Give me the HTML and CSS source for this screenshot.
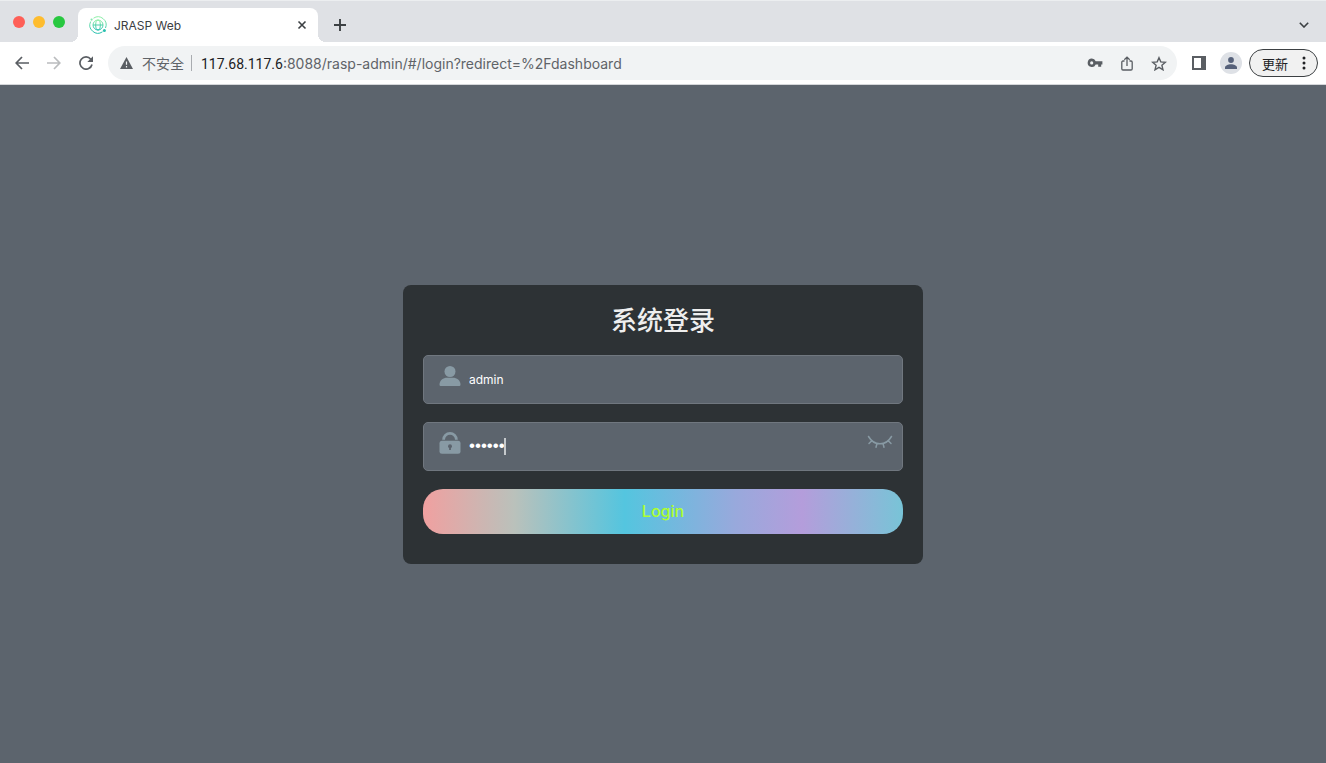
FILE: index.html
```html
<!DOCTYPE html>
<html lang="zh-CN">
<head>
<meta charset="utf-8">
<meta name="viewport" content="width=device-width, initial-scale=1">
<title>JRASP Web</title>
<link rel="stylesheet" href="styles.css">
</head>
<body>
<div class="window">
  <header class="browser">
    <div class="tab-strip">
      <div class="lights">
        <span class="light light-red"></span>
        <span class="light light-yellow"></span>
        <span class="light light-green"></span>
      </div>
      <div class="tab">
        <svg class="favicon" viewBox="0 0 18 18" width="18" height="18" fill="none">
          <defs><linearGradient id="fav" x1="0" y1="0" x2="0" y2="1"><stop offset="0" stop-color="#8fefa6"/><stop offset="1" stop-color="#27bfae"/></linearGradient></defs>
          <g stroke="url(#fav)" stroke-width="1">
            <circle cx="9" cy="9" r="5"/>
            <ellipse cx="9" cy="9" rx="2.3" ry="5"/>
            <path d="M4.500 2.200A8.100 8.100 0 0 1 16.500 12M13.500 15.800A8.100 8.100 0 0 1 1.700 5.500"/>
          </g>
          <path d="M4 9h10" stroke="#4fd0a8"/>
          <circle cx="2.600" cy="3.600" r="1.100" fill="#83e8ad"/>
          <circle cx="15.400" cy="14.400" r="1.500" fill="#27bfae"/>
        </svg>
        <span class="tab-title">JRASP Web</span>
        <button class="icon-button tab-close" aria-label="关闭标签页">
          <svg viewBox="0 0 10 10" width="10" height="10" stroke="#3c4043" stroke-width="1.600"><path d="M1.500 1.500l7 7M8.500 1.500l-7 7"/></svg>
        </button>
      </div>
      <button class="icon-button new-tab" aria-label="新标签页">
        <svg viewBox="0 0 12 12" width="12" height="12" stroke="#3c4043" stroke-width="1.900"><path d="M6 0v12M0 6h12"/></svg>
      </button>
      <button class="icon-button tab-search" aria-label="搜索标签页">
        <svg viewBox="0 0 10 6" width="10" height="6" fill="none" stroke="#3c4043" stroke-width="1.600"><path d="M.8.8L5 5 9.200.8"/></svg>
      </button>
    </div>
    <div class="toolbar">
      <nav class="nav">
        <button class="icon-button" aria-label="后退">
          <svg viewBox="0 0 14 14" width="14" height="14" fill="none" stroke="#5a5e63" stroke-width="1.700"><path d="M14 7H1.500M7 1L1.200 7 7 13"/></svg>
        </button>
        <button class="icon-button" aria-label="前进">
          <svg viewBox="0 0 14 14" width="14" height="14" fill="none" stroke="#babcbe" stroke-width="1.700"><path d="M0 7h12.500M7 1l5.800 6L7 13"/></svg>
        </button>
        <button class="icon-button" aria-label="重新加载">
          <svg viewBox="0 0 14 14" width="14" height="14"><path d="M11.800 3.200A6.100 6.100 0 1 0 13 8.500" fill="none" stroke="#5a5e63" stroke-width="1.700"/><path d="M14 .3v5.700H8.300z" fill="#5a5e63"/></svg>
        </button>
      </nav>
      <div class="address">
        <svg class="warn" viewBox="0 0 13 12" width="13" height="12"><path d="M6.500 0L13 12H0z" fill="#5a5e63"/><path d="M6.500 4.500v3.300M6.500 9v1.400" stroke="#f1f3f4" stroke-width="1.200"/></svg>
        <span class="insecure">不安全</span>
        <span class="divider"></span>
        <span class="url"><span class="host">117.68.117.6</span>:8088/rasp-admin/#/login?redirect=%2Fdashboard</span>
        <div class="address-actions">
          <button class="icon-button" aria-label="密码">
            <svg viewBox="0 0 16 10" width="16" height="10"><path fill="#5a5e63" fill-rule="evenodd" d="M4.700.600a4.200 4.200 0 1 0 4 5.900h2.500v2.300h3V6.500H15.400V3.200H8.700A4.200 4.200 0 0 0 4.700.600zm0 2.700a1.600 1.600 0 1 1 0 3.200 1.600 1.600 0 0 1 0-3.200z"/></svg>
          </button>
          <button class="icon-button" aria-label="分享">
            <svg viewBox="0 0 12 15" width="12" height="15" fill="none" stroke="#5a5e63" stroke-width="1.300"><path d="M3.500 5H2a1.200 1.200 0 0 0-1.200 1.200v6.600A1.200 1.200 0 0 0 2 14h8a1.200 1.200 0 0 0 1.200-1.200V6.200A1.200 1.200 0 0 0 10 5H8.500M6 10V1.200M3.300 3.800L6 1.100l2.700 2.700"/></svg>
          </button>
          <button class="icon-button" aria-label="收藏">
            <svg viewBox="0 0 16 15" width="16" height="15" fill="none" stroke="#5a5e63" stroke-width="1.400"><path d="M8 1.700l1.800 4.200 4.600.4-3.500 3 1.100 4.500L8 11.400l-4 2.400 1.100-4.500-3.500-3 4.600-.4z"/></svg>
          </button>
        </div>
      </div>
      <div class="tools">
        <button class="icon-button" aria-label="侧边栏">
          <svg viewBox="0 0 14 14" width="14" height="14"><path d="M0 0h14v14H0zM2 2v10h7V2z" fill="#5a5e63" fill-rule="evenodd"/></svg>
        </button>
        <button class="avatar" aria-label="个人资料">
          <svg viewBox="0 0 12 12" width="12" height="12" fill="#56617a"><circle cx="6" cy="3" r="2.900"/><path d="M0 12v-1.500C0 8.500 3 7.200 6 7.200s6 1.300 6 3.300V12z"/></svg>
        </button>
        <button class="update">
          <span>更新</span>
          <svg viewBox="0 0 4 14" width="4" height="14" fill="#202124"><circle cx="2" cy="2" r="1.500"/><circle cx="2" cy="7" r="1.500"/><circle cx="2" cy="12" r="1.500"/></svg>
        </button>
      </div>
    </div>
  </header>
  <main class="page">
    <form class="card">
      <h1 class="title">系统登录</h1>
      <div class="field">
        <label class="field-icon" for="username" aria-label="用户名">
          <svg viewBox="0 0 22 22" width="22" height="22" fill="#889aa4"><circle cx="11" cy="6.500" r="5.500"/><path d="M.5 19.500c0-4.200 3.800-6.700 7.500-6.700h6c3.700 0 7.500 2.500 7.500 6.700 0 1-.6 1.500-1.500 1.500H2C1.100 21 .5 20.500.5 19.500z"/></svg>
        </label>
        <input class="input" id="username" type="text" value="admin" autocomplete="off">
      </div>
      <div class="field">
        <label class="field-icon" for="password" aria-label="密码">
          <svg viewBox="0 0 22 22" width="22" height="22"><path d="M4.600 7.800a6.400 6.400 0 0 1 12.800 0" fill="none" stroke="#889aa4" stroke-width="2.800"/><rect x=".5" y="8.800" width="21" height="13" rx="2.500" fill="#889aa4"/><circle cx="11" cy="14.200" r="2" fill="#5c646d"/><path d="M11 14v4" stroke="#5c646d" stroke-width="1.800"/></svg>
        </label>
        <div class="password-box">
          <input class="input input-password" id="password" type="password" value="123456" autocomplete="off">
          <span class="caret"></span>
        </div>
        <button class="icon-button eye" type="button" aria-label="显示密码">
          <svg viewBox="0 0 26 14" width="26" height="14" fill="none" stroke="#889aa4" stroke-width="1.500" stroke-linecap="round"><path d="M1.500 1.500C4 5.800 8 8.800 13 8.800s9-3 11.500-7.300M4.800 5.700L2 8.500M21.200 5.700L24 8.500M10 8.500l-1 3.800M16 8.500l1 3.800"/></svg>
        </button>
      </div>
      <button class="login" type="button">Login</button>
    </form>
  </main>
</div>
</body>
</html>
```
FILE: styles.css
```css
* {
  box-sizing: border-box;
}

body {
  margin: 0;
  background: #5c646d;
  font-family: Inter, "Noto Sans CJK SC", sans-serif;
}

button,
input {
  font-family: inherit;
}

svg {
  display: block;
}

.window {
  display: flex;
  flex-direction: column;
  min-height: 100vh;
}

.icon-button {
  display: grid;
  place-items: center;
  width: 32px;
  height: 28px;
  padding: 0;
  border: 0;
  background: none;
}

.tab-strip {
  display: flex;
  align-items: flex-end;
  height: 42px;
  background: #dfe1e5;
  border-top: 1px solid #eceef0;
}

.lights {
  display: flex;
  gap: 8px;
  width: 78px;
  padding: 0 0 14px 13px;
}

.light {
  width: 12px;
  height: 12px;
  border-radius: 50%;
}

.light-red {
  background: #fe5f57;
}

.light-yellow {
  background: #febc2e;
}

.light-green {
  background: #28c840;
}

.tab {
  display: flex;
  align-items: center;
  gap: 7px;
  width: 240px;
  height: 34px;
  padding: 0 0 0 11px;
  background: #fff;
  border-radius: 8px 8px 0 0;
  position: relative;
}

.tab::before,
.tab::after {
  content: "";
  position: absolute;
  bottom: 0;
  width: 8px;
  height: 8px;
}

.tab::before {
  right: 100%;
  background: radial-gradient(circle at 0 0, #dfe1e5 8px, #fff 8px);
}

.tab::after {
  left: 100%;
  background: radial-gradient(circle at 100% 0, #dfe1e5 8px, #fff 8px);
}

.tab-title {
  flex: 1;
  font-size: 12px;
  color: #3c4043;
}

.new-tab {
  width: 44px;
  height: 34px;
}

.tab-search {
  width: 44px;
  height: 34px;
  margin-left: auto;
}

.toolbar {
  display: flex;
  align-items: center;
  height: 43px;
  padding: 0 8px 0 6px;
  background: #fff;
  border-bottom: 1px solid #d5d7da;
}

.nav {
  display: flex;
  width: 102px;
}

.address {
  display: flex;
  align-items: center;
  flex: 1;
  height: 34px;
  padding: 0 2px 0 12px;
  border-radius: 17px;
  background: #f1f3f4;
  font-size: 14px;
  color: #5f6368;
}

.insecure {
  margin-left: 9px;
}

.divider {
  width: 1px;
  height: 16px;
  margin: 0 9px 0 7px;
  background: #a9acb0;
}

.url {
  white-space: nowrap;
}

.host {
  font-family: Roboto, sans-serif;
  color: #202124;
}

.address-actions {
  display: flex;
  margin-left: auto;
}

.tools {
  display: flex;
  align-items: center;
  padding-left: 6px;
}

.avatar {
  display: grid;
  place-items: center;
  width: 22px;
  height: 22px;
  margin: 0 7px 0 5px;
  padding: 0;
  border: 0;
  border-radius: 50%;
  background: #dee1e6;
}

.update {
  display: flex;
  align-items: center;
  justify-content: space-between;
  width: 69px;
  height: 28px;
  padding: 0 11px 0 12px;
  border: 1px solid #3c4043;
  border-radius: 14px;
  background: #f1f1f1;
  color: #202124;
  font-size: 13px;
}

.page {
  display: grid;
  place-items: center;
  flex: 1;
  padding: 20px;
  background: #5c646d;
}

.card {
  display: flex;
  flex-direction: column;
  gap: 18px;
  width: 100%;
  max-width: 520px;
  padding: 20px 20px 30px;
  border-radius: 8px;
  background: #2d3235;
}

.title {
  margin: 0;
  color: #eee;
  font-size: 26px;
  font-weight: 500;
  line-height: 32px;
  text-align: center;
}

.field {
  display: flex;
  align-items: center;
  height: 49px;
  padding: 0 6px 0 15px;
  border: 1px solid #70777f;
  border-radius: 5px;
  background: #5c646d;
}

.field-icon {
  padding-bottom: 6px;
}

.input {
  flex: 1;
  display: block;
  width: 100%;
  height: 47px;
  padding: 0 8px;
  border: 0;
  outline: 0;
  background: none;
  color: #fff;
  font-size: 12px;
}

.input-password {
  font-family: "Liberation Sans", sans-serif;
  font-size: 17px;
}

.password-box {
  flex: 1;
  position: relative;
}

.caret {
  position: absolute;
  left: 43px;
  top: 15px;
  width: 2px;
  height: 17px;
  background: #c5c9cc;
}

.eye {
  padding-bottom: 8px;
}

.login {
  height: 45px;
  border: 0;
  border-radius: 20px;
  background: linear-gradient(90deg, #f0a0a0 0%, #bac1bb 19%, #54c5df 42%, #98a9dc 65%, #b49ddb 79%, #78c4d7 100%);
  color: #adff2f;
  font-size: 16px;
  font-weight: 500;
}
```
